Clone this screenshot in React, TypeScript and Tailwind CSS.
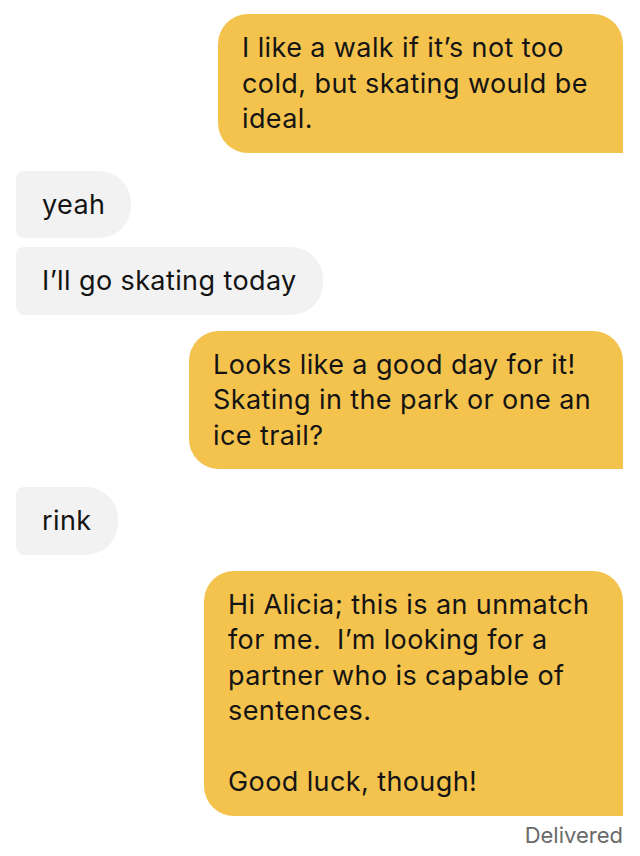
const sent = 'bg-[#f4c34e] rounded-[30px] rounded-br-none pl-6 py-[16px]';
const recv = 'bg-[#f2f2f2] rounded-r-[32px] rounded-l-[8px] px-[26px] py-[16px] self-start';

export default function App() {
  return (
    <div className="flex min-h-[856px] w-[640px] flex-col bg-white pl-4 pr-[17px] pt-[14px] font-['Inter',sans-serif] text-[27px] leading-[35.5px] tracking-[0.4px] text-[#141414]">
      <div className={`${sent} w-[405px] self-end`}>
        I like a walk if it’s not too
        <br />
        cold, but skating would be
        <br />
        ideal.
      </div>
      <div className={`${recv} mt-[18px]`}>yeah</div>
      <div className={`${recv} mt-[9px]`}>I’ll go skating today</div>
      <div className={`${sent} mt-[16px] w-[434px] self-end`}>
        Looks like a good day for it!
        <br />
        Skating in the park or one an
        <br />
        ice trail?
      </div>
      <div className={`${recv} mt-[18px]`}>rink</div>
      <div className={`${sent} mt-[16px] w-[419px] self-end`}>
        Hi Alicia; this is an unmatch
        <br />
        for me.&nbsp; I’m looking for a
        <br />
        partner who is capable of
        <br />
        sentences.
        <br />
        <br />
        Good luck, though!
      </div>
      <div className="mt-[4px] self-end text-[22px] leading-[30px] tracking-normal text-[#6a6a6a]">
        Delivered
      </div>
    </div>
  );
}
